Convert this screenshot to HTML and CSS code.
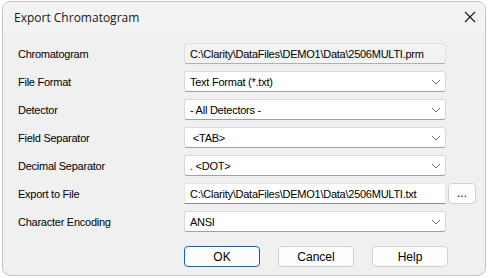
FILE: index.html
```html
<!DOCTYPE html>
<html lang="en">
<head>
    <meta charset="UTF-8">
    <title>Export Chromatogram</title>
    <link rel="stylesheet" href="styles.css">
</head>
<body>
    <div class="dialog">
        <div class="title-bar">
            <span class="title">Export Chromatogram</span>
            <svg class="close" width="12" height="12" viewBox="0 0 12 12">
                <path d="M1 1L11 11M11 1L1 11" stroke="#1a1a1a" stroke-width="1.1" fill="none"/>
            </svg>
        </div>

        <div class="form">
            <label>Chromatogram</label>
            <div class="field readonly">C:\Clarity\DataFiles\DEMO1\Data\2506MULTI.prm</div>
            <span></span>

            <label>File Format</label>
            <div class="field combo">Text Format (*.txt)<svg class="chev" width="10" height="6" viewBox="0 0 10 6"><path d="M1 1L5 5L9 1" stroke="#6e6e6e" fill="none"/></svg></div>
            <span></span>

            <label>Detector</label>
            <div class="field combo">- All Detectors -<svg class="chev" width="10" height="6" viewBox="0 0 10 6"><path d="M1 1L5 5L9 1" stroke="#6e6e6e" fill="none"/></svg></div>
            <span></span>

            <label>Field Separator</label>
            <div class="field combo">&nbsp;&lt;TAB&gt;<svg class="chev" width="10" height="6" viewBox="0 0 10 6"><path d="M1 1L5 5L9 1" stroke="#6e6e6e" fill="none"/></svg></div>
            <span></span>

            <label>Decimal Separator</label>
            <div class="field combo">. &lt;DOT&gt;<svg class="chev" width="10" height="6" viewBox="0 0 10 6"><path d="M1 1L5 5L9 1" stroke="#6e6e6e" fill="none"/></svg></div>
            <span></span>

            <label>Export to File</label>
            <div class="field edit">C:\Clarity\DataFiles\DEMO1\Data\2506MULTI.txt</div>
            <button class="browse">...</button>

            <label>Character Encoding</label>
            <div class="field combo">ANSI<svg class="chev" width="10" height="6" viewBox="0 0 10 6"><path d="M1 1L5 5L9 1" stroke="#6e6e6e" fill="none"/></svg></div>
            <span></span>
        </div>

        <div class="buttons">
            <button class="btn default">OK</button>
            <button class="btn">Cancel</button>
            <button class="btn">Help</button>
        </div>
    </div>
</body>
</html>
```

FILE: styles.css
```css
body {
    margin: 0;
    background: #ffffff;
    font-family: 'Liberation Sans', Arial, sans-serif;
    font-size: 11px;
    letter-spacing: -0.25px;
    color: #000;
}

.dialog {
    width: 482px;
    height: 273px;
    margin: 1px 0 0 2px;
    border: 1px solid #c4c4c4;
    border-radius: 8px;
    background: #f0f0f0;
    overflow: hidden;
}

.title-bar {
    height: 30px;
    background: #f3f3f3;
    display: flex;
    align-items: center;
    padding: 0 9px 0 11px;
}

.title {
    font-family: 'Open Sans', sans-serif;
    font-size: 12px;
    letter-spacing: 0;
    color: #1a1a1a;
    flex: 1;
}

.form {
    display: grid;
    grid-template-columns: 166px 262px 30px;
    grid-auto-rows: 21px;
    row-gap: 7px;
    padding: 11px 0 0 15px;
}

.form label {
    display: flex;
    align-items: center;
}

.field {
    display: flex;
    align-items: center;
    padding: 0 5px;
    border: 1px solid #d9d9d9;
    border-bottom-color: #a0a0a0;
    border-radius: 3px;
    background: #fff;
    white-space: nowrap;
    overflow: hidden;
}

.field.readonly {
    background: #f3f3f3;
    border-color: #e1e1e1;
    border-bottom-color: #b0b0b0;
}

.field.edit {
    border-color: #e5e5e5;
    border-bottom-color: #8a8a8a;
    border-radius: 3px 3px 0 0;
}

.chev {
    margin-left: auto;
    margin-right: -1px;
}

.browse {
    margin-left: 2px;
    width: 28px;
    font: inherit;
    font-size: 12px;
    letter-spacing: 0;
    background: #fdfdfd;
    border: 1px solid #d0d0d0;
    border-radius: 4px;
    padding: 0 0 2px;
}

.buttons {
    display: flex;
    gap: 18px;
    padding: 14px 0 0 181px;
}

.btn {
    width: 76px;
    height: 21px;
    font: inherit;
    font-size: 12px;
    background: #fdfdfd;
    border: 1px solid #d0d0d0;
    border-radius: 4px;
    padding: 0;
}

.btn.default {
    border-color: #0067c0;
}
```
